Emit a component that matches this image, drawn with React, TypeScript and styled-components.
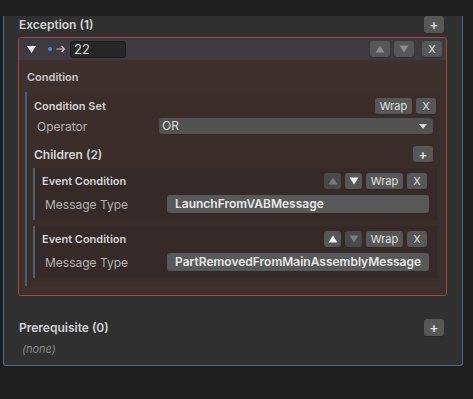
import React from 'react';
import styled, {createGlobalStyle} from 'styled-components'

const GlobalStyle = createGlobalStyle`
  html, body {
    margin: 0;
    padding: 0;
    background: #1e1e1e;
    font-family: Inter, "Noto Sans", sans-serif;
  }
`

const Page = styled.div`
  width: 473px;
  height: 399px;
  overflow: hidden;
`

const Panel = styled.div`
  width: 460px;
  margin-left: 3px;
  background: #303030;
  border: 1px solid #4b6b8e;
  border-top: none;
  border-radius: 0 0 3px 3px;
  padding: 0 15px 9px 14px;
  box-sizing: border-box;
`

const SectionHead = styled.div<{$top: number}>`
  display: flex;
  align-items: center;
  justify-content: space-between;
  height: 17px;
  margin-top: ${p => p.$top}px;
  padding: 0 3px 0 1px;
`

const Title = styled.span<{$size?: number}>`
  color: #d4d4d8;
  font-size: ${p => p.$size || 12}px;
  font-weight: 600;
`

const SmallBtn = styled.button<{$w?: number, $dim?: boolean}>`
  width: ${p => p.$w || 20}px;
  height: 16px;
  padding: 0;
  border: none;
  border-radius: 3px;
  background: ${p => p.$dim ? '#494949' : '#575757'};
  color: #e2e2e2;
  font-family: Inter, "Noto Sans", sans-serif;
  font-size: 11px;
  display: flex;
  align-items: center;
  justify-content: center;
  box-shadow: 0 1px 0 #2a2a2a;
`

const PlusBtn = styled(SmallBtn)`
  height: 17px;
  font-size: 14px;
  font-weight: 500;
`

const ItemBox = styled.div`
  margin-top: 4px;
  border: 1px solid #a04b3d;
  border-radius: 3px;
  overflow: hidden;
`

const ItemHead = styled.div`
  height: 22px;
  background: #3f3a40;
  display: flex;
  align-items: center;
  padding: 0 4px 0 8px;
`

const KeyInput = styled.div`
  width: 56px;
  height: 17px;
  box-sizing: border-box;
  background: #262626;
  border: 1px solid #1b1b1b;
  border-radius: 3px;
  color: #dcdcdc;
  font-size: 13px;
  line-height: 15px;
  padding-left: 3px;
  margin-left: 4px;
`

const Dot = styled.span`
  width: 4px;
  height: 4px;
  border-radius: 50%;
  background: #4c8fd6;
  margin-left: 12px;
`

const Spacer = styled.div`
  flex: 1;
`

const BtnRow = styled.div`
  display: flex;
  gap: 4px;
  align-items: center;
`

const ItemBody = styled.div`
  background: #3e302d;
  padding: 11px 6px 9px 6px;
`

const Label = styled.div`
  color: #c8c8cc;
  font-size: 11px;
  font-weight: 600;
  height: 12px;
  line-height: 12px;
  padding-left: 2px;
`

const Group = styled.div<{$bg: string, $top: number}>`
  margin-top: ${p => p.$top}px;
  background: ${p => p.$bg};
  border-left: 2px solid #4a5b74;
  display: flex;
  flex-direction: column;
`

const GroupHead = styled.div`
  display: flex;
  align-items: center;
  justify-content: space-between;
  padding: 0 4px 0 7px;
`

const FieldRow = styled.div`
  display: flex;
  align-items: center;
  padding-left: 10px;
`

const FieldLabel = styled.span<{$w: number}>`
  width: ${p => p.$w}px;
  color: #b4b4b4;
  font-size: 12px;
`

const Dropdown = styled.div`
  flex: 1;
  height: 16px;
  background: #525252;
  border-radius: 3px;
  color: #dedede;
  font-size: 12px;
  line-height: 16px;
  padding: 0 6px 0 3px;
  display: flex;
  align-items: center;
  justify-content: space-between;
  box-shadow: 0 1px 0 #2a2a2a;
`

const ValueField = styled.div`
  flex: 1;
  height: 18px;
  background: #585858;
  border-radius: 3px;
  color: #e8e8e8;
  font-size: 12px;
  font-weight: 600;
  line-height: 18px;
  padding-left: 8px;
  box-shadow: 0 1px 0 #2a2a2a;
`

const Event = styled.div<{$top: number}>`
  margin-top: ${p => p.$top}px;
  background: #352a27;
  border-left: 2px solid #4a5b74;
  padding: 5px 8px 7px 0;
  display: flex;
  flex-direction: column;
  gap: 6px;
`

const None = styled.div`
  margin-top: 6px;
  padding-left: 4px;
  color: #8a8a8a;
  font-size: 11px;
  font-style: italic;
  height: 14px;
  line-height: 14px;
`

function Tri({up, color}: {up?: boolean, color: string}) {
    return (
        <svg width="10" height="8" viewBox="0 0 10 8">
            <polygon points={up ? "5,0.5 9.5,7.5 0.5,7.5" : "0.5,0.5 9.5,0.5 5,7.5"} fill={color}/>
        </svg>
    )
}

function Arrows({upOn, downOn}: {upOn: boolean, downOn: boolean}) {
    return (
        <>
            <SmallBtn $w={17} $dim={!upOn}><Tri up color={upOn ? '#f2f2f2' : '#7c7c7c'}/></SmallBtn>
            <SmallBtn $w={17} $dim={!downOn}><Tri color={downOn ? '#f2f2f2' : '#7c7c7c'}/></SmallBtn>
        </>
    )
}

function EventCondition({top, value, upOn, downOn}: {top: number, value: string, upOn: boolean, downOn: boolean}) {
    return (
        <Event $top={top}>
            <GroupHead style={{paddingRight: 2}}>
                <Title $size={11}>Event Condition</Title>
                <BtnRow>
                    <Arrows upOn={upOn} downOn={downOn}/>
                    <SmallBtn $w={37}>Wrap</SmallBtn>
                    <SmallBtn>X</SmallBtn>
                </BtnRow>
            </GroupHead>
            <FieldRow>
                <FieldLabel $w={122}>Message Type</FieldLabel>
                <ValueField>{value}</ValueField>
            </FieldRow>
        </Event>
    )
}

function App() {
    return (
        <Page>
            <GlobalStyle/>
            <Panel>
                <SectionHead $top={16}>
                    <Title>Exception (1)</Title>
                    <PlusBtn>+</PlusBtn>
                </SectionHead>
                <ItemBox>
                    <ItemHead>
                        <svg width="9" height="7" viewBox="0 0 9 7">
                            <polygon points="0,0 9,0 4.5,7" fill="#f0f0f0"/>
                        </svg>
                        <Dot/>
                        <svg width="10" height="8" viewBox="0 0 10 8" style={{marginLeft: 4}}>
                            <path d="M0.5 4 H8.5 M5.5 1 L8.5 4 L5.5 7" stroke="#c8c8c8" strokeWidth="1.1" fill="none"/>
                        </svg>
                        <KeyInput>22</KeyInput>
                        <Spacer/>
                        <BtnRow>
                            <SmallBtn><Tri up color="#8e8e8e"/></SmallBtn>
                            <SmallBtn><Tri color="#8e8e8e"/></SmallBtn>
                            <SmallBtn style={{marginLeft: 4}}>X</SmallBtn>
                        </BtnRow>
                    </ItemHead>
                    <ItemBody>
                        <Label>Condition</Label>
                        <Group $bg="#3a2d2a" $top={9}>
                            <GroupHead style={{marginTop: 6}}>
                                <Title $size={11}>Condition Set</Title>
                                <BtnRow>
                                    <SmallBtn $w={37}>Wrap</SmallBtn>
                                    <SmallBtn>X</SmallBtn>
                                </BtnRow>
                            </GroupHead>
                            <FieldRow style={{marginTop: 4, paddingRight: 7}}>
                                <FieldLabel $w={122}>Operator</FieldLabel>
                                <Dropdown>
                                    OR
                                    <svg width="8" height="5" viewBox="0 0 8 5">
                                        <polygon points="0,0 8,0 4,5" fill="#d8d8d8"/>
                                    </svg>
                                </Dropdown>
                            </FieldRow>
                            <GroupHead style={{marginTop: 12, paddingRight: 7}}>
                                <Title>Children (2)</Title>
                                <PlusBtn style={{height: 16}}>+</PlusBtn>
                            </GroupHead>
                            <div style={{padding: '0 3px 8px 6px'}}>
                                <EventCondition top={6} value="LaunchFromVABMessage" upOn={false} downOn/>
                                <EventCondition top={6} value="PartRemovedFromMainAssemblyMessage" upOn downOn={false}/>
                            </div>
                        </Group>
                    </ItemBody>
                </ItemBox>
                <SectionHead $top={23}>
                    <Title>Prerequisite (0)</Title>
                    <PlusBtn>+</PlusBtn>
                </SectionHead>
                <None>(none)</None>
            </Panel>
        </Page>
    );
}

export default App;
